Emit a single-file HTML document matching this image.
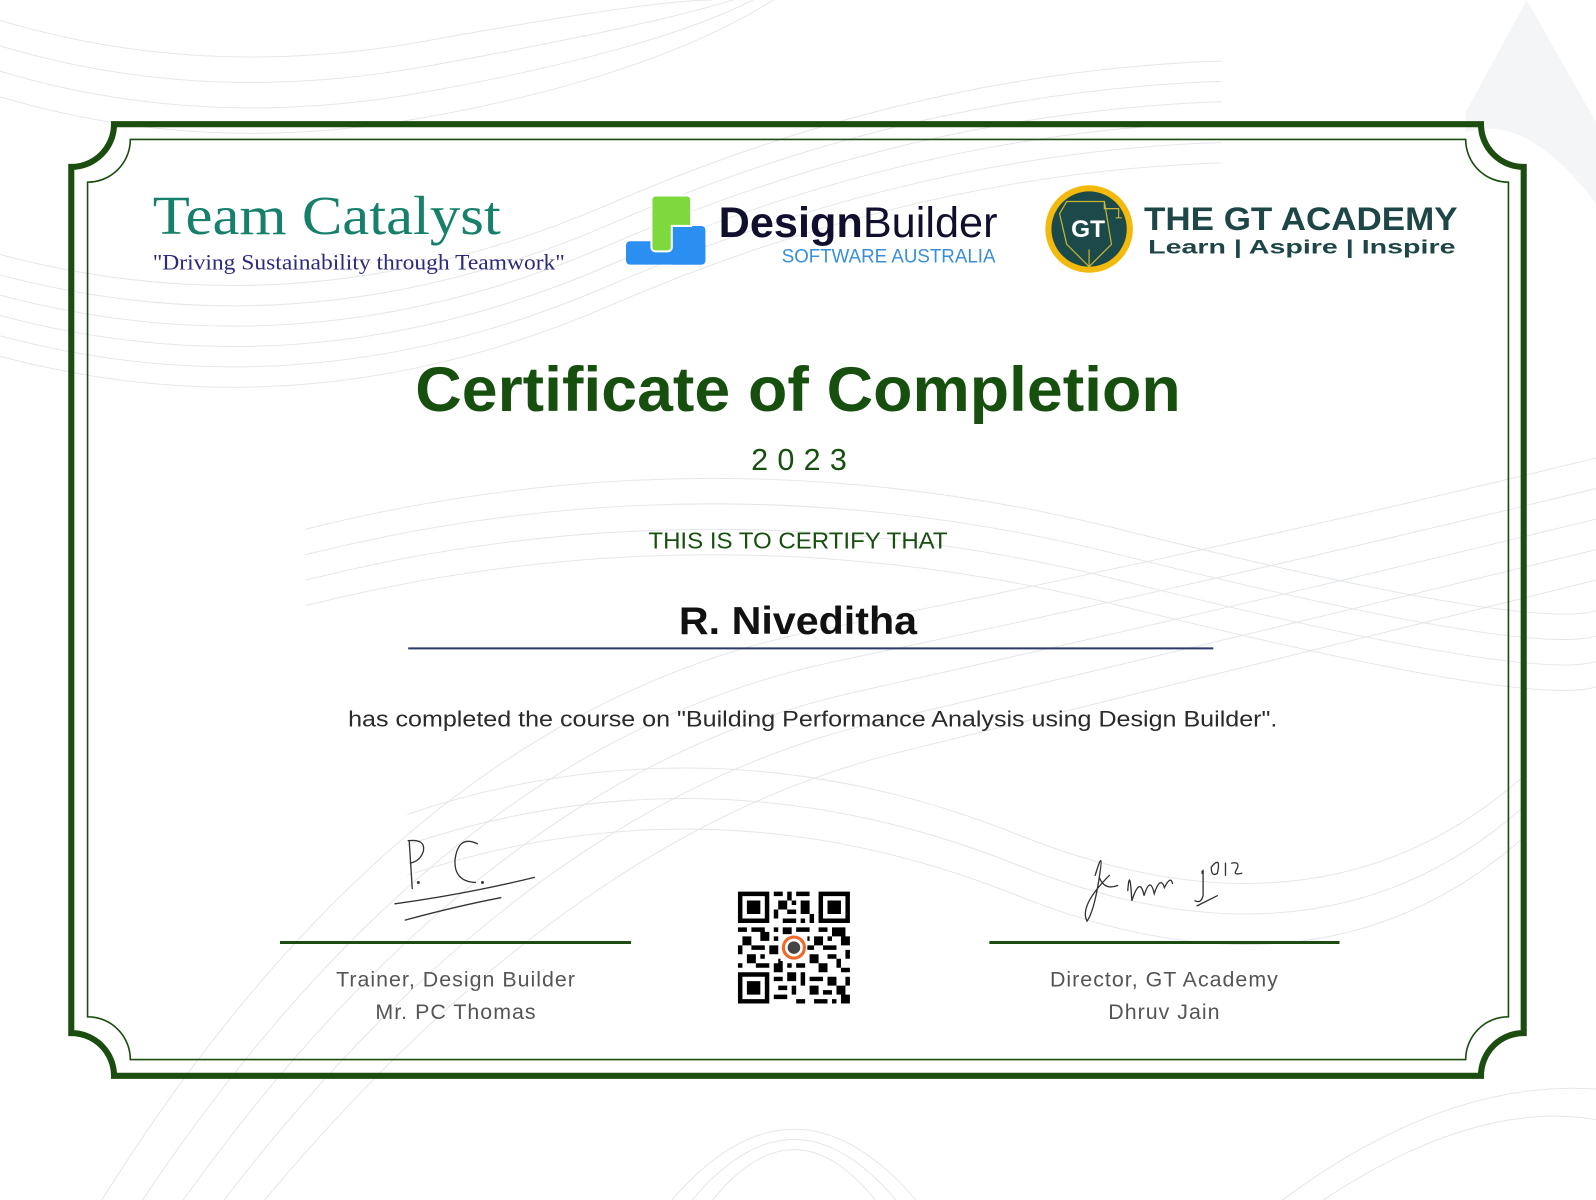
<!DOCTYPE html>
<html><head><meta charset="utf-8"><style>
html,body{margin:0;padding:0;background:#fff;width:1596px;height:1200px;overflow:hidden}
svg{display:block}
</style></head><body>
<svg width="1596" height="1200" viewBox="0 0 1568 1179" xmlns="http://www.w3.org/2000/svg">
<rect width="1568" height="1179" fill="#fff"/>
<g fill="none" stroke="#e4e7ea" stroke-width="1">
<path d="M0 250 Q300 330 600 200 T1200 60"/><path d="M0 270 Q300 350 600 220 T1200 80"/><path d="M0 290 Q300 370 600 240 T1200 100"/><path d="M0 310 Q300 390 600 260 T1200 120"/><path d="M0 330 Q300 410 600 280 T1200 140"/><path d="M0 350 Q300 430 600 300 T1200 160"/>
<path d="M0 20 Q200 80 420 40 T700 0"/><path d="M0 45 Q200 105 420 65 T720 0"/><path d="M0 70 Q200 130 420 90 T740 0"/><path d="M0 95 Q200 155 420 115 T760 0"/>
<path d="M100 1179 Q400 700 800 620 T1568 450"/><path d="M140 1179 Q440 730 820 650 T1568 480"/><path d="M180 1179 Q480 760 840 680 T1568 510"/><path d="M220 1179 Q520 790 860 710 T1568 540"/><path d="M260 1179 Q560 820 880 740 T1568 570"/>
<path d="M300 520 Q700 420 1100 520 T1568 600"/><path d="M300 545 Q700 445 1100 545 T1568 625"/><path d="M300 570 Q700 470 1100 570 T1568 650"/><path d="M300 595 Q700 495 1100 595 T1568 675"/>
<path d="M400 800 Q700 700 1000 820 T1500 760"/><path d="M400 830 Q700 730 1000 850 T1500 790"/><path d="M400 860 Q700 760 1000 880 T1500 820"/>
<path d="M700 1179 Q780 1080 860 1179"/><path d="M680 1179 Q780 1060 880 1179"/><path d="M660 1179 Q780 1040 900 1179"/>
<path d="M1300 1179 Q1450 1080 1568 1100"/><path d="M1260 1179 Q1420 1060 1568 1070"/>
</g>
<path d="M1440 110 L1500 0 L1568 120 L1568 200 Q1500 110 1440 130 Z" fill="#f4f5f6"/>
<g fill="none" stroke="#1a4d0f">
<path d="M112 122 H1455 A42 42 0 0 0 1497 164 V1015 A42 42 0 0 0 1455 1057 H112 A42 42 0 0 0 70 1015 V164 A42 42 0 0 0 112 122 Z" stroke-width="6"/>
<path d="M128 137 H1440 A42 42 0 0 0 1482 179 V999 A42 42 0 0 0 1440 1041 H128 A42 42 0 0 0 86 999 V179 A42 42 0 0 0 128 137 Z" stroke-width="1.6"/>
</g>
<text x="150" y="230" font-family="Liberation Serif,serif" font-size="54" fill="#17806b" textLength="342" lengthAdjust="spacingAndGlyphs">Team Catalyst</text>
<text x="150" y="265" font-family="Liberation Serif,serif" font-size="22" fill="#2b2a7c" textLength="405" lengthAdjust="spacingAndGlyphs">"Driving Sustainability through Teamwork"</text>
<!-- DesignBuilder logo -->
<rect x="615" y="237" width="78" height="23" rx="4" fill="#2a8ff0"/>
<rect x="656" y="222" width="37" height="38" rx="4" fill="#2a8ff0"/>
<path d="M644 192 h31 a4 4 0 0 1 4 4 v26 h-19 v21 a4 4 0 0 1 -4 4 h-12 a4 4 0 0 1 -4 -4 v-47 a4 4 0 0 1 4 -4 z" fill="#7ed93c" stroke="#fff" stroke-width="2"/>
<text x="706" y="233" font-family="Liberation Sans,sans-serif" font-size="42" fill="#10102e" textLength="274" lengthAdjust="spacingAndGlyphs"><tspan font-weight="bold">Design</tspan>Builder</text>
<text x="768" y="258" font-family="Liberation Sans,sans-serif" font-size="19" fill="#3a8ed8" textLength="210" lengthAdjust="spacingAndGlyphs">SOFTWARE AUSTRALIA</text>
<circle cx="1070" cy="225" r="43" fill="#f3b90c"/>
<circle cx="1070" cy="225" r="37" fill="#1c4a4a"/>
<path d="M1048 198 H1085 L1092 240 L1070 262 L1048 240 L1041 210 Z M1085 198 L1085 205 H1099 V214 M1096 214 H1102 M1070 245 V262" fill="none" stroke="#c9b531" stroke-width="1.2"/>
<text x="1069" y="233" text-anchor="middle" font-family="Liberation Sans,sans-serif" font-weight="bold" font-size="24" fill="#fff">GT</text>
<text x="1124" y="226" font-family="Liberation Sans,sans-serif" font-weight="bold" font-size="32" fill="#1e4646" textLength="308" lengthAdjust="spacingAndGlyphs">THE GT ACADEMY</text>
<text x="1128" y="249" font-family="Liberation Sans,sans-serif" font-weight="bold" font-size="19" fill="#1e4646" textLength="302" lengthAdjust="spacingAndGlyphs">Learn | Aspire | Inspire</text>
<text x="408" y="404" font-family="Liberation Sans,sans-serif" font-weight="bold" font-size="62" fill="#174f0f" textLength="752" lengthAdjust="spacingAndGlyphs">Certificate of Completion</text>
<text x="738" y="462" font-family="Liberation Sans,sans-serif" font-size="30" fill="#174f0f" textLength="94" lengthAdjust="spacing">2023</text>
<text x="637" y="539" font-family="Liberation Sans,sans-serif" font-size="23" fill="#174f0f" textLength="294" lengthAdjust="spacingAndGlyphs">THIS IS TO CERTIFY THAT</text>
<text x="667" y="623" font-family="Liberation Sans,sans-serif" font-weight="bold" font-size="38" fill="#111" textLength="234" lengthAdjust="spacingAndGlyphs">R. Niveditha</text>
<line x1="401" y1="637" x2="1192" y2="637" stroke="#2b3a68" stroke-width="2"/>
<text x="342" y="714" font-family="Liberation Sans,sans-serif" font-size="22" fill="#2a2a2a" textLength="913" lengthAdjust="spacingAndGlyphs">has completed the course on "Building Performance Analysis using Design Builder".</text>
<g fill="none" stroke="#333" stroke-width="1.3" stroke-linecap="round">
<path d="M405 873 L402 826 M401 826 Q418 824 416 836 Q413 846 403 848"/>
<path d="M469 829 Q450 820 447 845 Q446 866 467 867"/>
<circle cx="411" cy="867" r="0.8"/><circle cx="474" cy="867" r="0.8"/>
<path d="M388 888 Q460 878 525 862"/><path d="M398 904 Q450 890 492 882"/>
<path d="M1076 860 Q1085 830 1080 862 Q1075 895 1068 905 Q1060 890 1090 860 M1080 862 Q1085 875 1098 870"/>
<path d="M1108 875 Q1110 850 1112 885 Q1120 860 1124 880 Q1130 860 1134 878 Q1140 860 1144 872 Q1150 860 1152 868"/>
<path d="M1182 855 V880 Q1180 888 1174 885 M1190 852 Q1200 840 1196 858 Q1190 862 1190 852 M1204 848 V860 M1210 848 Q1220 846 1214 856 Q1212 860 1220 858 M1176 890 L1196 880 M1181 858 v-2"/>
</g>
<line x1="275" y1="926" x2="620" y2="926" stroke="#1a4d0f" stroke-width="3"/>
<line x1="972" y1="926" x2="1316" y2="926" stroke="#1a4d0f" stroke-width="3"/>
<g font-family="Liberation Sans,sans-serif" font-size="21" fill="#555" text-anchor="middle" letter-spacing="1">
<text x="448" y="969">Trainer, Design Builder</text>
<text x="448" y="1001">Mr. PC Thomas</text>
<text x="1144" y="969">Director, GT Academy</text>
<text x="1144" y="1001">Dhruv Jain</text>
</g>
<g transform="translate(725 876) scale(4.4)" fill="#000">
<path fill-rule="evenodd" d="M0 0h7v7h-7z M1 1v5h5v-5z M2 2h3v3h-3z M18 0h7v7h-7z M19 1v5h5v-5z M20 2h3v3h-3z M0 18h7v7h-7z M1 19v5h5v-5z M2 20h3v3h-3z"/>
<path d="M8 0h2v1h-2z M11 0h1v2h-1z M13 0h3v1h-3z M9 2h2v2h-2z M12 2h1v1h-1z M14 2h2v3h-2z M8 4h1v2h-1z M11 4h2v1h-2z M10 6h3v1h-3z M14 6h1v1h-1z M16 5h1v2h-1z
M0 8h2v1h-2z M3 8h3v1h-3z M8 8h1v1h-1z M10 8h2v2h-2z M13 8h3v1h-3z M18 8h2v1h-2z M21 8h3v2h-3z
M1 10h2v2h-2z M5 9h2v2h-2z M8 10h1v1h-1z M14 10h2v1h-2z M17 10h2v2h-2z M20 10h1v1h-1z M23 10h2v2h-2z
M0 12h1v2h-1z M3 12h3v1h-3z M7 12h2v2h-2z M15 12h2v1h-2z M19 12h3v1h-3z M24 13h1v2h-1z
M2 14h2v2h-2z M5 14h1v1h-1z M9 15h1v1h-1z M16 14h2v2h-2z M20 14h2v1h-2z M22 15h1v2h-1z
M0 16h1v1h-1z M4 16h3v1h-3z M8 16h2v2h-2z M11 16h1v1h-1z M13 16h2v1h-2z M18 16h2v2h-2z M23 17h2v1h-2z
M8 19h2v1h-2z M11 18h2v2h-2z M14 18h1v3h-1z M16 19h3v1h-3z M20 19h2v2h-2z M24 19h1v2h-1z
M9 21h2v1h-2z M12 21h1v2h-1z M16 21h2v2h-2z M19 22h2v1h-2z M22 21h2v2h-2z
M8 23h3v1h-3z M13 24h2v1h-2z M17 24h3v1h-3z M21 24h1v1h-1z M23 23h2v2h-2z"/>
<rect x="9.5" y="9.5" width="6" height="6" fill="#fff"/>
<circle cx="12.5" cy="12.5" r="2.7" fill="#ef6a2a"/>
<circle cx="12.5" cy="12.5" r="2" fill="#fff"/>
<circle cx="12.5" cy="12.5" r="1.4" fill="#444"/>
</g>
</svg>
</body></html>
